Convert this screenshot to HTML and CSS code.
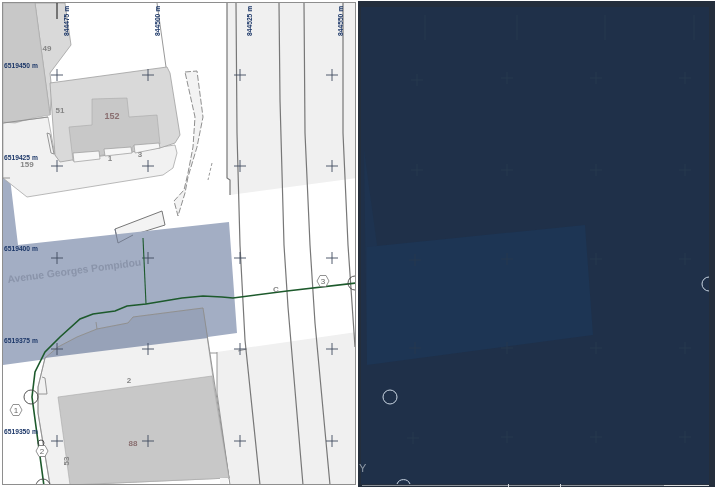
FILE: index.html
```html
<!DOCTYPE html>
<html lang="fr">
<head>
<meta charset="utf-8">
<title>Plan</title>
<link rel="stylesheet" href="styles.css">
</head>
<body>
<main class="page">
<svg class="panel plan" width="356" height="487" viewBox="0 0 356 487">
  <defs>
    <path id="cross" d="M-6 0H6M0-6V6"/>
    <clipPath id="frame"><rect x="3" y="3" width="352" height="481"/></clipPath>
  </defs>
  <rect class="paper" width="356" height="487"/>
  <g clip-path="url(#frame)">
    <path class="light" d="M227 3H356V178L237 194L230 195V180L227 178Z"/>
    <path class="light" d="M217 352L356 332V485H230L217 393Z"/>
    <path class="island solid" d="M115 229L162 211L165 225L133 235L118 243Z"/>
    <path class="road" d="M3 125L10 178L18 245L229 222L237 333L3 365Z"/>
    <path class="outline" d="M115 229L118 243L133 235"/>
    <path class="parcel" d="M3 123L48 117L55 155L60 161L175 145L177 153L173 168L163 175L27 197L3 178Z"/>
    <path class="parcel-mid" d="M35 3H65L71 45L50 73L52 92L50 115Z"/>
    <path class="hard" d="M3 3H35L50 115L33 118L15 123L3 122Z"/>
    <path class="parcel-mid" d="M50 83L167 67L170 73L180 135L175 143L160 148L72 160L60 162L55 155Z"/>
    <path class="edge" d="M157 3L166 67M47 133L50 134L54 154L51 153Z"/>
    <path class="hard" d="M69 127L92 125L92 99L127 98L129 117L157 115L160 144L133 146L133 152L103 155L73 161Z"/>
    <path class="window" d="M73 153L99 151L100 159L74 162ZM104 149L131 147L132 153L105 156ZM134 145L159 143L160 148L135 153Z"/>
    <path class="island" d="M185 72L197 71L203 117L197 147L188 177L185 193L178 216L174 201L184 190L188 173L193 147L195 117Z"/>
    <path class="edge" stroke-dasharray="3 2" d="M212 163L208 180"/>
    <path class="parcel" d="M45 358L58 347L77 337L97 329L128 323L133 317L203 308L217 406L229 478L70 485L50 485L38 413L38 387Z"/>
    <path class="road-dark" d="M45 358L58 347L77 337L97 329L128 323L133 317L203 308L208 338Z"/>
    <path class="edge" d="M96 322L97 329L128 323L133 317L203 308L229 478M45 358L38 387L38 413L50 485M45 358L58 347L77 337L97 329M217 352V393L230 485M210 353H217M42 377L45 378L47 394L38 394"/>
    <path class="hard" d="M58 397L212 376L229 478L70 485Z"/>
    <rect class="window flat" x="220" y="478" width="8" height="7"/>
    <path class="edge" d="M3 178L10 178M3 123L48 117M238 351L247 349"/>
    <path class="line" d="M236 3L237 133L240 245L245 340L260 485"/>
    <path class="line" d="M279 3L280 100L284 245L288 307L303 485"/>
    <path class="line" d="M304 3L305 133L310 245L315 323L330 485"/>
    <path class="line" d="M343 3L343 133L348 245L355 347"/>
    <path class="line" d="M227 3V178L230 180V195"/>
    <path class="tick" d="M57 3V19"/>
    <g class="crosses">
      <use href="#cross" x="57" y="75"/><use href="#cross" x="148" y="75"/><use href="#cross" x="240" y="75"/><use href="#cross" x="332" y="75"/>
      <use href="#cross" x="57" y="166"/><use href="#cross" x="148" y="166"/><use href="#cross" x="240" y="166"/><use href="#cross" x="332" y="166"/>
      <use href="#cross" x="57" y="258"/><use href="#cross" x="148" y="258"/><use href="#cross" x="240" y="258"/><use href="#cross" x="332" y="258"/>
      <use href="#cross" x="57" y="349"/><use href="#cross" x="148" y="349"/><use href="#cross" x="240" y="349"/><use href="#cross" x="332" y="349"/>
      <use href="#cross" x="57" y="441"/><use href="#cross" x="148" y="441"/><use href="#cross" x="240" y="441"/><use href="#cross" x="332" y="441"/>
    </g>
    <path class="route" d="M44 486L32 397L35 372L45 352L60 337L80 319L93 314L115 311L127 306L146 304L182 298L203 296L222 297L233 298L287 291L356 283"/>
    <path class="route thin" d="M146 304L143 238"/>
    <circle class="ring" cx="31" cy="397" r="7"/>
    <circle class="ring" cx="43" cy="486" r="7"/>
    <circle class="ring" cx="355" cy="283" r="7"/>
    <circle class="ring" cx="41" cy="443" r="3"/>
    <path class="hex" d="M10 410L13 404.500H19L22 410L19 415.500H13Z"/>
    <path class="hex" d="M36 451L39 445.500H45L48 451L45 456.500H39Z"/>
    <path class="hex" d="M317 281L320 275.500H326L329 281L326 286.500H320Z"/>
    <text class="num" x="16" y="413">1</text>
    <text class="num" x="42" y="454">2</text>
    <text class="num" x="323" y="284">3</text>
    <text class="lab" x="47" y="51">49</text>
    <text class="lab" x="60" y="113">51</text>
    <text class="lab red big" x="112" y="119">152</text>
    <text class="lab" x="110" y="161">1</text>
    <text class="lab" x="140" y="157">3</text>
    <text class="lab" x="27" y="167">159</text>
    <text class="lab" x="129" y="383">2</text>
    <text class="lab red" x="133" y="446">88</text>
    <text class="lab" transform="translate(69 461) rotate(-90)">53</text>
    <text class="lab" x="276" y="292">C</text>
    <text class="street" transform="translate(8 283) rotate(-7.500)">Avenue Georges Pompidou</text>
    <text class="coord" x="4" y="68">6519450 m</text>
    <text class="coord" x="4" y="160">6519425 m</text>
    <text class="coord" x="4" y="251">6519400 m</text>
    <text class="coord" x="4" y="343">6519375 m</text>
    <text class="coord" x="4" y="434">6519350 m</text>
    <text class="coord" transform="translate(69 36) rotate(-90)">844475 m</text>
    <text class="coord" transform="translate(160 36) rotate(-90)">844500 m</text>
    <text class="coord" transform="translate(252 36) rotate(-90)">844525 m</text>
    <text class="coord" transform="translate(343 36) rotate(-90)">844550 m</text>
  </g>
  <rect class="frame" x="2.500" y="2.500" width="353" height="482"/>
</svg>
<svg class="panel model" width="359" height="487" viewBox="358 0 359 487">
  <rect class="outer" x="358" y="1" width="357" height="486"/>
  <rect class="sheet" x="361" y="7" width="348" height="477"/>
  <path class="zone side" d="M364 150L377 245L367 365Z"/>
  <path class="zone" d="M367 247L585 225L593 335L367 365Z"/>
  <g class="faint">
    <use href="#cross" x="417" y="80"/><use href="#cross" x="507" y="78"/><use href="#cross" x="596" y="78"/><use href="#cross" x="685" y="78"/>
    <use href="#cross" x="417" y="170"/><use href="#cross" x="507" y="170"/><use href="#cross" x="596" y="170"/><use href="#cross" x="685" y="170"/>
    <use href="#cross" x="415" y="260"/><use href="#cross" x="507" y="259"/><use href="#cross" x="596" y="259"/><use href="#cross" x="685" y="259"/>
    <use href="#cross" x="415" y="348"/><use href="#cross" x="507" y="348"/><use href="#cross" x="596" y="348"/><use href="#cross" x="685" y="348"/>
    <use href="#cross" x="413" y="438"/><use href="#cross" x="507" y="437"/><use href="#cross" x="596" y="437"/><use href="#cross" x="685" y="437"/>
    <path d="M425 15V40M517 15V40M605 15V40M694 15V40"/>
  </g>
  <circle class="white-ring" cx="390" cy="397" r="7"/>
  <path class="white-ring" d="M397 484A7 7 0 0 1 410 484"/>
  <path class="white-ring" d="M709 277A7 7 0 0 0 709 291"/>
  <text class="axis" x="359" y="472">Y</text>
  <path class="rule" d="M362 485.500H664"/>
  <path class="rule bright" d="M664 485.500H709"/>
  <path class="rule bright" d="M508.500 484V487M560.500 484V487"/>
</svg>
</main>
</body>
</html>
```

FILE: styles.css
```css
html, body {
  margin: 0;
  background: #fff;
}
.page {
  display: flex;
  gap: 2px;
  width: 717px;
  height: 487px;
  overflow: hidden;
}
.panel {
  display: block;
  flex: none;
  filter: blur(0.4px);
}
.paper { fill: #fff; }
.light { fill: #f0f0f0; }
.road { fill: #a3aec4; }
.outline { fill: none; stroke: #6f7789; stroke-width: .9; }
.road-dark { fill: #97a2b8; }
.parcel { fill: #f1f1f1; stroke: #a8a8a8; stroke-width: .8; }
.parcel-mid { fill: #d9d9d9; stroke: #a0a0a0; stroke-width: .8; }
.hard { fill: #c8c8c8; stroke: #a8a8a8; stroke-width: .6; }
.window { fill: #f6f6f6; stroke: #999; stroke-width: .7; }
.window.flat { stroke: none; }
.island { fill: #f3f3f3; stroke: #8f8f8f; stroke-width: 1; stroke-dasharray: 6 2; }
.island.solid { stroke-dasharray: none; stroke: #777; }
.edge { fill: none; stroke: #8c8c8c; stroke-width: .9; }
.line { fill: none; stroke: #777; stroke-width: 1.2; }
.tick { stroke: #111; stroke-width: 1; }
.crosses use { fill: none; stroke: #3f4a5e; stroke-width: .9; }
.route { fill: none; stroke: #1d5a2c; stroke-width: 1.6; }
.route.thin { stroke-width: 1.1; }
.ring { fill: none; stroke: #444; stroke-width: .9; }
.hex { fill: #fff; stroke: #777; stroke-width: .8; }
.num { font: 8px "Liberation Sans", sans-serif; fill: #666; text-anchor: middle; }
.lab { font: bold 8px "Liberation Sans", sans-serif; fill: #858585; text-anchor: middle; }
.lab.red { fill: #8a6f70; }
.lab.big { font-size: 9px; }
.street { font: bold 10.300px "Liberation Sans", sans-serif; fill: #8a94aa; }
.coord { font: bold 6.700px "Liberation Sans", sans-serif; fill: #1c3768; }
.frame { fill: none; stroke: #8e8e8e; stroke-width: 1; }
.outer { fill: #242e3c; }
.sheet { fill: #1f3049; }
.zone { fill: #1d3554; }
.zone.side { fill: #1e3350; }
.faint use, .faint path { fill: none; stroke: #26384f; stroke-width: 1; }
.white-ring { fill: none; stroke: #c9d5e2; stroke-width: 1; }
.axis { font: 11px "Liberation Sans", sans-serif; fill: #8e99a6; }
.rule { stroke: #8b929b; stroke-width: 1; }
.rule.bright { stroke: #d7dadd; }
```
